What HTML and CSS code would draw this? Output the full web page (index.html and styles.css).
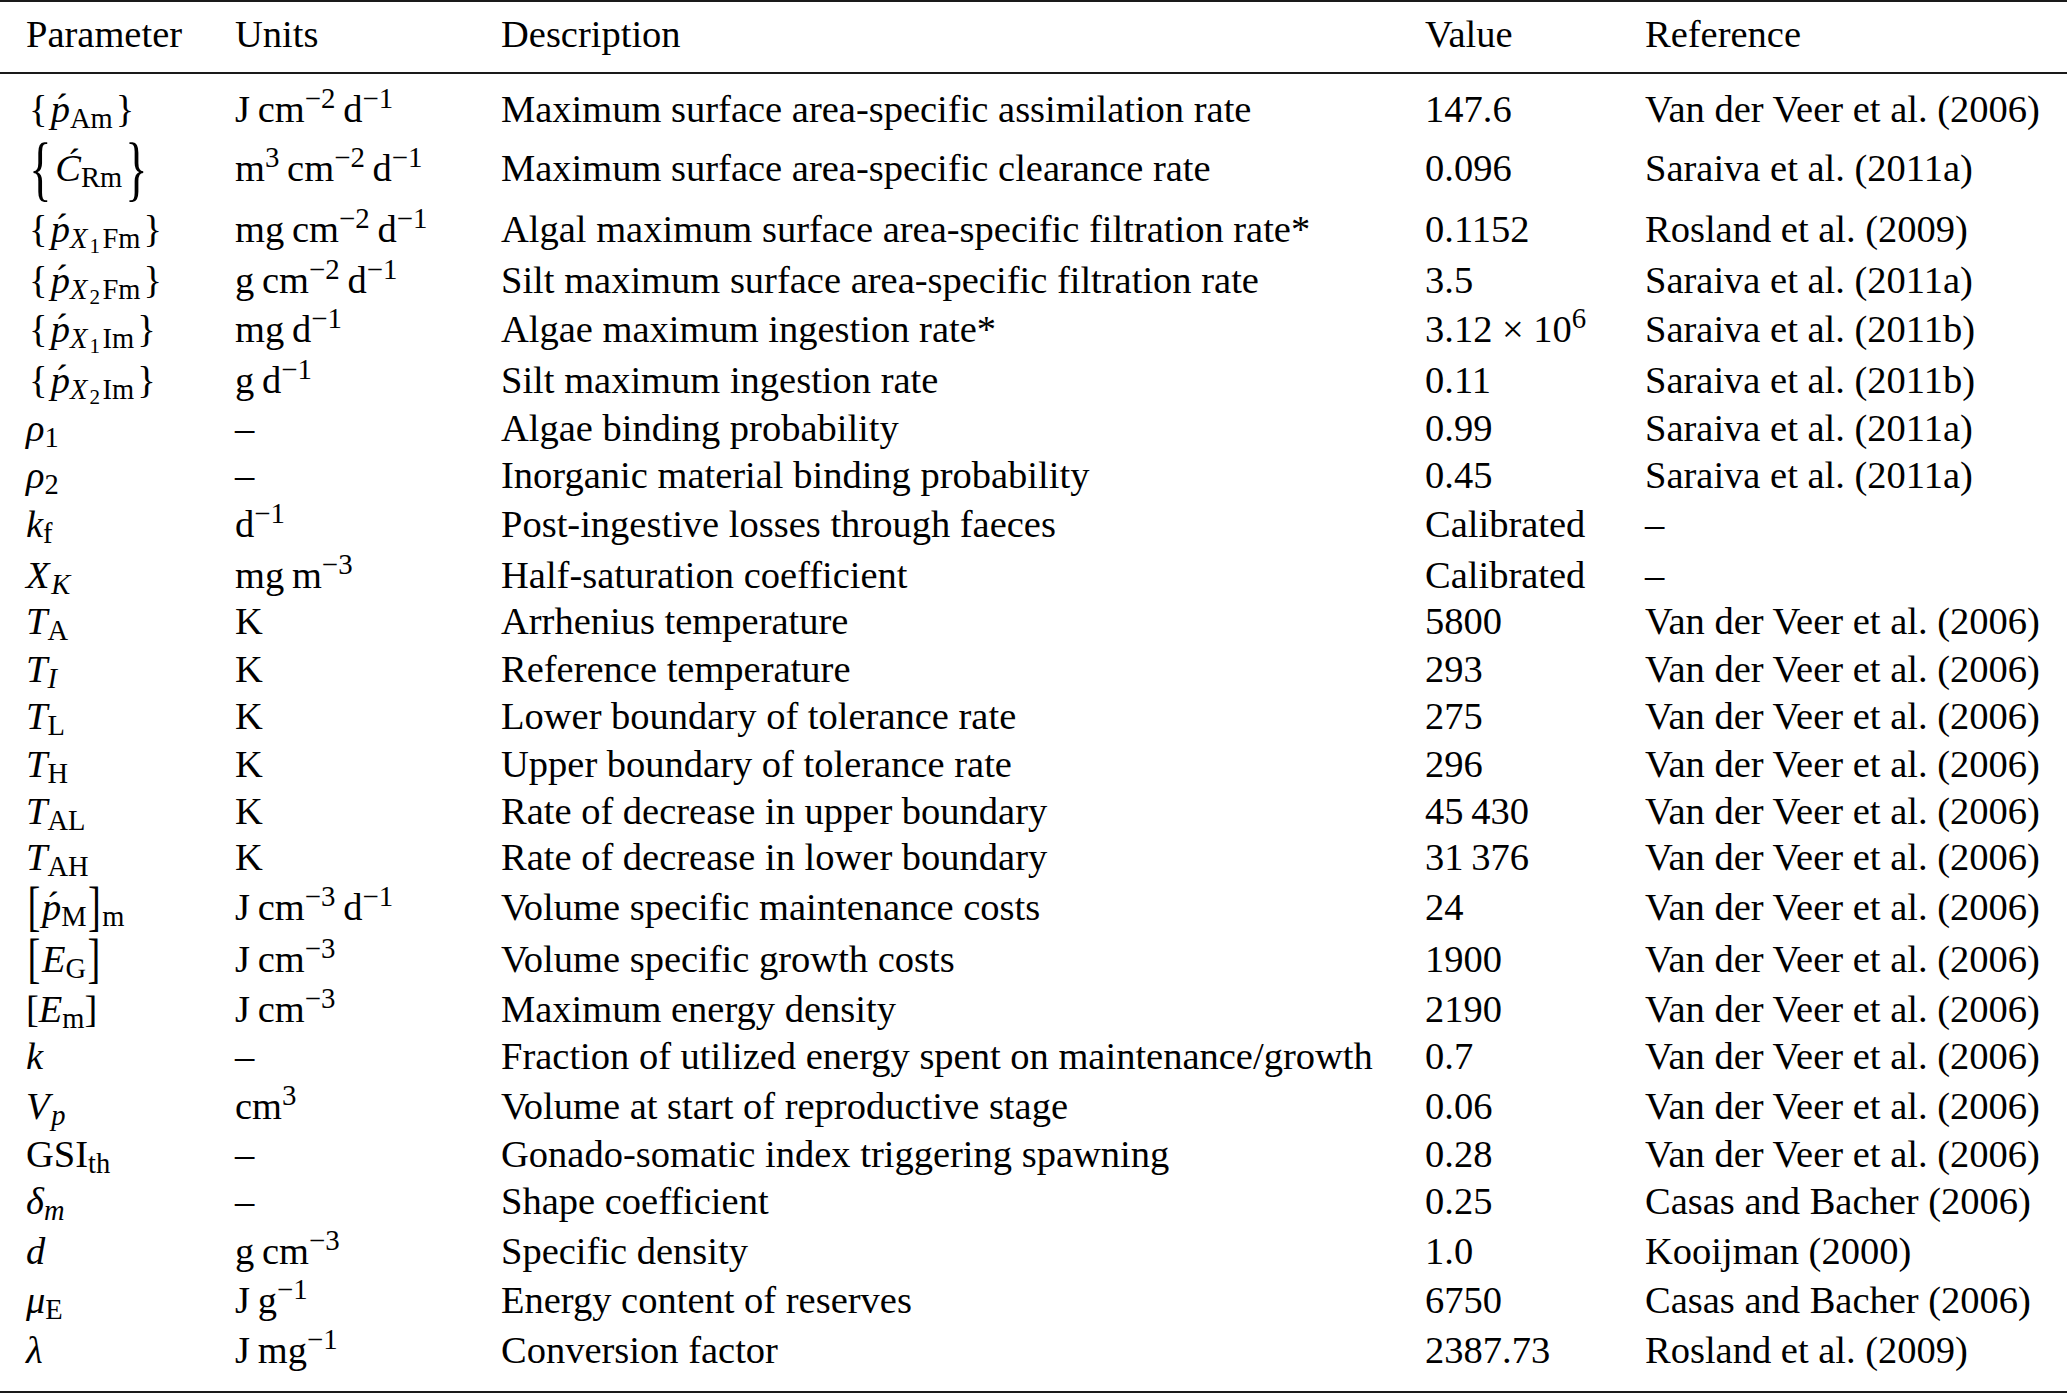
FILE: index.html
```html
<!DOCTYPE html>
<html lang="en">
<head>
<meta charset="utf-8">
<title>Model parameters</title>
<link rel="stylesheet" href="styles.css">
</head>
<body>
<div class="tbl" role="table">
  <div class="row head" role="row">
    <div>Parameter</div><div>Units</div><div>Description</div><div>Value</div><div>Reference</div>
  </div>
  <div class="body">
    <div class="row h59"><div><span class="br">{</span><i class="acc">p</i><sub>Am</sub><span class="br">}</span></div><div>J&thinsp;cm<sup>−2</sup>&thinsp;d<sup>−1</sup></div><div>Maximum surface area-specific assimilation rate</div><div>147.6</div><div>Van der Veer et al. (2006)</div></div>
    <div class="row h61"><div><span class="br big">{</span><i class="acc accC">C</i><sub>Rm</sub><span class="br big">}</span></div><div>m<sup>3</sup>&thinsp;cm<sup>−2</sup>&thinsp;d<sup>−1</sup></div><div>Maximum surface area-specific clearance rate</div><div>0.096</div><div>Saraiva et al. (2011a)</div></div>
    <div class="row h51"><div><span class="br">{</span><i class="acc">p</i><sub><i>X</i><sub class="ss">1</sub>Fm</sub><span class="br">}</span></div><div>mg&thinsp;cm<sup>−2</sup>&thinsp;d<sup>−1</sup></div><div>Algal maximum surface area-specific filtration rate*</div><div>0.1152</div><div>Rosland et al. (2009)</div></div>
    <div class="row h49"><div><span class="br">{</span><i class="acc">p</i><sub><i>X</i><sub class="ss">2</sub>Fm</sub><span class="br">}</span></div><div>g&thinsp;cm<sup>−2</sup>&thinsp;d<sup>−1</sup></div><div>Silt maximum surface area-specific filtration rate</div><div>3.5</div><div>Saraiva et al. (2011a)</div></div>
    <div class="row h51"><div><span class="br">{</span><i class="acc">p</i><sub><i>X</i><sub class="ss">1</sub>Im</sub><span class="br">}</span></div><div>mg&thinsp;d<sup>−1</sup></div><div>Algae maximum ingestion rate*</div><div>3.12 × 10<sup>6</sup></div><div>Saraiva et al. (2011b)</div></div>
    <div class="row h48"><div><span class="br">{</span><i class="acc">p</i><sub><i>X</i><sub class="ss">2</sub>Im</sub><span class="br">}</span></div><div>g&thinsp;d<sup>−1</sup></div><div>Silt maximum ingestion rate</div><div>0.11</div><div>Saraiva et al. (2011b)</div></div>
    <div class="row h47"><div><i>ρ</i><sub>1</sub></div><div>–</div><div>Algae binding probability</div><div>0.99</div><div>Saraiva et al. (2011a)</div></div>
    <div class="row h49"><div><i>ρ</i><sub>2</sub></div><div>–</div><div>Inorganic material binding probability</div><div>0.45</div><div>Saraiva et al. (2011a)</div></div>
    <div class="row h51"><div><i>k</i><sub>f</sub></div><div>d<sup>−1</sup></div><div>Post-ingestive losses through faeces</div><div>Calibrated</div><div>–</div></div>
    <div class="row h46"><div><i>X</i><sub class="isub"><i>K</i></sub></div><div>mg&thinsp;m<sup>−3</sup></div><div>Half-saturation coefficient</div><div>Calibrated</div><div>–</div></div>
    <div class="row h48"><div><i>T</i><sub>A</sub></div><div>K</div><div>Arrhenius temperature</div><div>5800</div><div>Van der Veer et al. (2006)</div></div>
    <div class="row h47"><div><i>T</i><sub><i>I</i></sub></div><div>K</div><div>Reference temperature</div><div>293</div><div>Van der Veer et al. (2006)</div></div>
    <div class="row h48"><div><i>T</i><sub>L</sub></div><div>K</div><div>Lower boundary of tolerance rate</div><div>275</div><div>Van der Veer et al. (2006)</div></div>
    <div class="row h47"><div><i>T</i><sub>H</sub></div><div>K</div><div>Upper boundary of tolerance rate</div><div>296</div><div>Van der Veer et al. (2006)</div></div>
    <div class="row h46"><div><i>T</i><sub>AL</sub></div><div>K</div><div>Rate of decrease in upper boundary</div><div>45&thinsp;430</div><div>Van der Veer et al. (2006)</div></div>
    <div class="row h50"><div><i>T</i><sub>AH</sub></div><div>K</div><div>Rate of decrease in lower boundary</div><div>31&thinsp;376</div><div>Van der Veer et al. (2006)</div></div>
    <div class="row h52"><div><span class="br sq">[</span><i class="acc">p</i><sub>M</sub><span class="br sq">]</span><sub>m</sub></div><div>J&thinsp;cm<sup>−3</sup>&thinsp;d<sup>−1</sup></div><div>Volume specific maintenance costs</div><div>24</div><div>Van der Veer et al. (2006)</div></div>
    <div class="row h50"><div><span class="br sq">[</span><i>E</i><sub>G</sub><span class="br sq">]</span></div><div>J&thinsp;cm<sup>−3</sup></div><div>Volume specific growth costs</div><div>1900</div><div>Van der Veer et al. (2006)</div></div>
    <div class="row h47"><div>[<i>E</i><sub>m</sub>]</div><div>J&thinsp;cm<sup>−3</sup></div><div>Maximum energy density</div><div>2190</div><div>Van der Veer et al. (2006)</div></div>
    <div class="row h50"><div><i>k</i></div><div>–</div><div>Fraction of utilized energy spent on maintenance/growth</div><div>0.7</div><div>Van der Veer et al. (2006)</div></div>
    <div class="row h48"><div><i>V</i><sub class="isub"><i>p</i></sub></div><div>cm<sup>3</sup></div><div>Volume at start of reproductive stage</div><div>0.06</div><div>Van der Veer et al. (2006)</div></div>
    <div class="row h47"><div>GSI<sub>th</sub></div><div>–</div><div>Gonado-somatic index triggering spawning</div><div>0.28</div><div>Van der Veer et al. (2006)</div></div>
    <div class="row h50"><div><i>δ</i><sub><i>m</i></sub></div><div>–</div><div>Shape coefficient</div><div>0.25</div><div>Casas and Bacher (2006)</div></div>
    <div class="row h49"><div><i>d</i></div><div>g&thinsp;cm<sup>−3</sup></div><div>Specific density</div><div>1.0</div><div>Kooijman (2000)</div></div>
    <div class="row h50"><div><i>μ</i><sub>E</sub></div><div>J&thinsp;g<sup>−1</sup></div><div>Energy content of reserves</div><div>6750</div><div>Casas and Bacher (2006)</div></div>
    <div class="row h64"><div><i>λ</i></div><div>J&thinsp;mg<sup>−1</sup></div><div>Conversion factor</div><div>2387.73</div><div>Rosland et al. (2009)</div></div>
  </div>
</div>
</body>
</html>
```
FILE: styles.css
```css
html, body {
  margin: 0;
  padding: 0;
  background: #ffffff;
}

body {
  color: #000000;
  font-family: "Liberation Serif", "Times New Roman", serif;
  font-size: 38.5px;
}

.tbl {
  width: 2067px;
  border-top: 2px solid #1a1a1a;
  border-bottom: 2px solid #1a1a1a;
}

.row {
  display: grid;
  grid-template-columns: 209px 266px 924px 220px 1fr;
  padding-left: 26px;
  line-height: 46px;
  white-space: nowrap;
}

.head {
  line-height: 64px;
  padding-bottom: 6px;
  border-bottom: 2px solid #1a1a1a;
}

.body {
  padding-top: 12px;
}

.h46 { height: 46px; }
.h47 { height: 47px; }
.h48 { height: 48px; }
.h49 { height: 49px; }
.h50 { height: 50px; }
.h51 { height: 51px; }
.h52 { height: 52px; }
.h59 { height: 59px; }
.h61 { height: 61px; }
.h64 { height: 64px; }

i {
  font-style: italic;
}

sub {
  font-size: 0.74em;
  vertical-align: -0.22em;
  line-height: 0;
}

sub.isub {
  margin-left: 0.06em;
}

sup {
  font-size: 0.75em;
  vertical-align: 0.5em;
  line-height: 0;
}

sub .ss {
  font-size: 0.74em;
  vertical-align: -0.24em;
  margin: 0 0.12em 0 0.1em;
}

.br {
  display: inline-block;
  margin: 0 0.08em;
}

.br.big {
  transform: scale(1.2, 1.85);
  margin: 0 0.14em;
}

.br.sq {
  transform: scaleY(1.4);
  margin: 0 0.04em;
}

.acc {
  position: relative;
  display: inline-block;
}

.acc::after {
  content: "\00B4";
  position: absolute;
  left: 0.12em;
  top: -0.04em;
  font-style: normal;
}

.accC::after {
  left: 0.32em;
  top: -0.16em;
}
```
